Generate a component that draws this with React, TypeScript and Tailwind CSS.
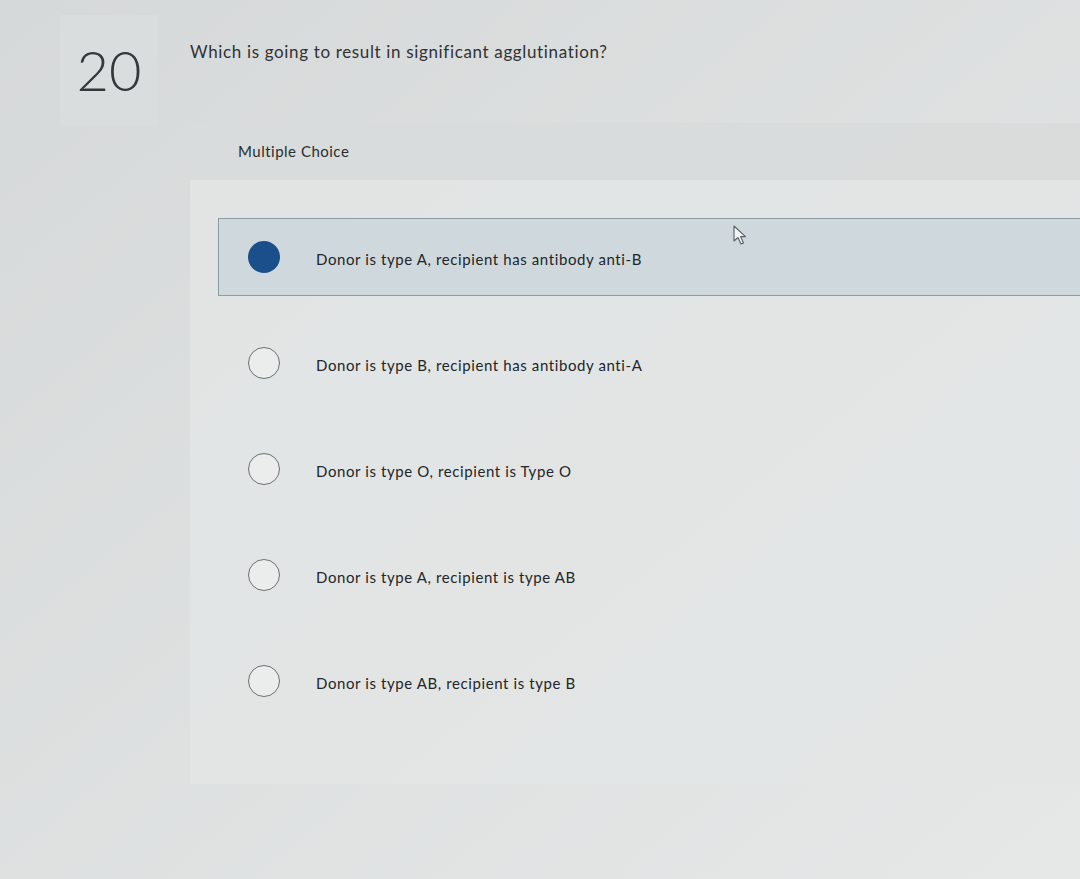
import React from 'react';

const options = [
  'Donor is type A, recipient has antibody anti-B',
  'Donor is type B, recipient has antibody anti-A',
  'Donor is type O, recipient is Type O',
  'Donor is type A, recipient is type AB',
  'Donor is type AB, recipient is type B',
];

const Cursor = () => (
  <svg width="18" height="22" viewBox="0 0 18 22" className="absolute left-[733px] top-[225px]">
    <path d="M1 1 L1 16 L5 12.5 L8 19 L10.5 18 L7.6 11.6 L12.5 11.6 Z" fill="#f1f4f5" stroke="#5a6065" strokeWidth="1.1" strokeLinejoin="round" />
  </svg>
);

export default function App() {
  const selected = 0;

  return (
    <div className="relative min-h-[879px] w-[1080px] overflow-hidden bg-gradient-to-br from-[#d6d9d9] to-[#e6e8e8] text-[#2a2c2e]" style={{ fontFamily: 'Lato, "Open Sans", sans-serif' }}>
      <div className="flex pl-[60px] pt-[15px]">
        <div className="flex h-[110px] w-[98px] items-center justify-center bg-[#dadddd]">
          <span className="text-[56px] font-light leading-none text-[#35383b]">20</span>
        </div>

        <div className="ml-[32px] flex-1">
          <div className="pt-[26px] text-[17px] leading-[22px] tracking-[0.65px] text-[#303234]">
            Which is going to result in significant agglutination?
          </div>

          <div className="mt-[60px] bg-[#e3e6e6]/80 pb-[64px]">
            <div className="flex h-[57px] items-center bg-[#d6d9d9]/70 pl-[48px] text-[15px] tracking-[0.5px] text-[#2b2d2f]">
              Multiple Choice
            </div>

            <div className="mt-[38px] flex flex-col gap-[28px] pl-[28px]">
              {options.map((opt, i) => (
                <label
                  key={opt}
                  className={
                    i === selected
                      ? 'flex h-[78px] items-center border border-r-0 border-[#8d9ba4] bg-[#cfd9dd] pl-[29px]'
                      : 'flex h-[78px] items-center border border-transparent pl-[29px]'
                  }
                >
                  {i === selected ? (
                    <span className="h-[32px] w-[32px] shrink-0 rounded-full bg-[#1b4f8c]" />
                  ) : (
                    <span className="h-[32px] w-[32px] shrink-0 rounded-full border border-[#6a6f73] bg-[#ebeded]" />
                  )}
                  <span className="ml-[36px] mt-[4px] text-[15px] tracking-[0.6px] text-[#232527]">{opt}</span>
                </label>
              ))}
            </div>
          </div>
        </div>
      </div>
      <Cursor />
    </div>
  );
}
